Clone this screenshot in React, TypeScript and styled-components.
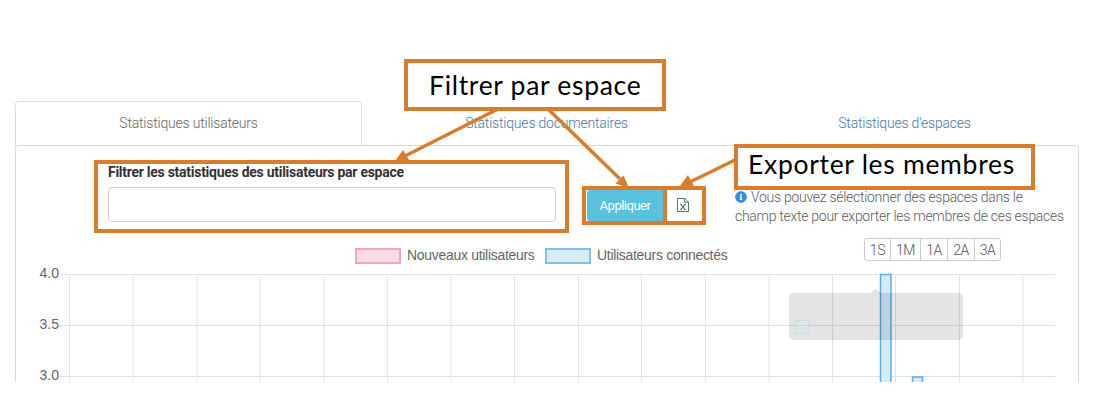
import React from "react";
import styled, { createGlobalStyle } from "styled-components";
import { FaInfoCircle } from "react-icons/fa";

const accent = "#d97c2b";

const GlobalStyle = createGlobalStyle`
  * { box-sizing: border-box; }
  body { margin: 0; background: #fff; font-family: Roboto, "Liberation Sans", sans-serif; }
`;

const Page = styled.main`
  position: relative;
  width: 1095px;
  height: 404px;
  overflow: hidden;
  padding: 101px 16px 0 15px;
  background: #fff;
`;

const Tabs = styled.nav`
  display: flex;
  gap: 11px;
  height: 45px;
  margin-bottom: -1px;
`;

const Tab = styled.a<{ $active?: boolean }>`
  flex: 0 0 347px;
  padding-top: 11px;
  text-align: center;
  font-size: 14px;
  line-height: 20px;
  font-weight: 300;
  letter-spacing: -0.2px;
  color: ${(p) => (p.$active ? "#666" : "#4a76ad")};
  border: 1px solid ${(p) => (p.$active ? "#dcdcdc" : "transparent")};
  border-bottom: 0;
  border-radius: 4px 4px 0 0;
`;

const Panel = styled.section`
  height: 237px;
  border: 1px solid #d8d8d8;
  border-bottom: 0;
  border-radius: 4px 4px 0 0;
`;

const FilterRow = styled.div`
  display: flex;
  align-items: flex-start;
  height: 92px;
  padding: 14px 0 0 78px;
`;

const FilterField = styled.div`
  flex: none;
  width: 475px;
  height: 73px;
  border: 4px solid ${accent};
  padding: 0 9px 0 10px;
`;

const FieldLabel = styled.label`
  display: block;
  height: 23px;
  font-size: 14px;
  line-height: 16px;
  font-weight: 700;
  color: #333;
  letter-spacing: -0.27px;
  white-space: nowrap;
`;

const FieldInput = styled.input`
  display: block;
  width: 448px;
  height: 35px;
  border: 1px solid #ccc;
  border-radius: 4px;
  background: #fff;
  outline: 0;
`;

const Actions = styled.div`
  display: flex;
  flex: none;
  width: 124px;
  height: 39px;
  margin: 26px 0 0 13px;
  border: 4px solid ${accent};
`;

const ApplyButton = styled.button`
  flex: none;
  width: 76px;
  margin-left: 1px;
  padding: 0;
  border: 0;
  border-radius: 3px 0 0 3px;
  background: #5bc0de;
  color: #fff;
  font: 400 13px Roboto, sans-serif;
  letter-spacing: -0.5px;
`;

const ExportButton = styled.button`
  display: flex;
  align-items: center;
  justify-content: center;
  flex: 1;
  padding: 0 4px 1px 0;
  border: 0;
  border-left: 4px solid ${accent};
  background: #fff;
`;

const Hint = styled.p`
  width: 340px;
  margin: 28px 0 0 29px;
  font-size: 14px;
  line-height: 18.5px;
  font-weight: 300;
  letter-spacing: -0.28px;
  color: #5c5c5c;
  white-space: nowrap;
  svg { color: #2f8fdc; font-size: 12px; vertical-align: -1px; margin-right: 4px; }
`;

const ChartHeader = styled.div`
  display: flex;
  height: 24px;
  padding-left: 339px;
`;

const Legend = styled.div`
  display: flex;
  gap: 10px;
  padding-top: 8px;
  width: 509px;
`;

const LegendItem = styled.span<{ $w: number }>`
  display: flex;
  gap: 6px;
  width: ${(p) => p.$w}px;
  font: 14px/18px "Liberation Sans", sans-serif;
  letter-spacing: -0.3px;
  color: #666;
  white-space: nowrap;
`;

const Swatch = styled.i<{ $line: string; $fill: string }>`
  flex: none;
  width: 46px;
  height: 16px;
  margin-top: 2px;
  border: 2px solid ${(p) => p.$line};
  background: ${(p) => p.$fill};
`;

const Periods = styled.div`
  display: flex;
  height: 23px;
  border: 1px solid #ccc;
  border-radius: 3px;
`;

const Period = styled.button<{ $w: number }>`
  width: ${(p) => p.$w}px;
  padding: 0;
  border: 0;
  background: transparent;
  font: 300 14px Roboto, sans-serif;
  letter-spacing: -0.4px;
  color: #555;
  & + & { border-left: 1px solid #ccc; }
`;

const Chart = styled.svg`
  display: block;
  text { font: 14px "Liberation Sans", sans-serif; fill: #666; }
`;

const Callout = styled.div<{ $x: number; $y: number; $w: number; $h: number; $pad: number; $line: number }>`
  position: absolute;
  left: ${(p) => p.$x}px;
  top: ${(p) => p.$y}px;
  width: ${(p) => p.$w}px;
  height: ${(p) => p.$h}px;
  padding-left: ${(p) => p.$pad}px;
  border: 4px solid ${accent};
  background: #fff;
  color: #000;
  font: 26.5px Lato, sans-serif;
  line-height: ${(p) => p.$line}px;
  letter-spacing: 0.7px;
  white-space: nowrap;
`;

const Arrows = styled.svg`
  position: absolute;
  left: 0;
  top: 0;
  pointer-events: none;
`;

const columns = [69.5, 133, 197, 260, 324, 387.5, 451, 514.5, 578.5, 641.5, 705.5, 769, 832.5, 895.5, 959.5, 1023];
const rows = [
  { y: 274.5, label: "4.0" },
  { y: 325.5, label: "3.5" },
  { y: 376.5, label: "3.0" },
];
const periods = [
  { label: "1S", w: 25 },
  { label: "1M", w: 30 },
  { label: "1A", w: 27 },
  { label: "2A", w: 27 },
  { label: "3A", w: 26 },
];

const ExcelIcon = () => (
  <svg width="12" height="14" viewBox="0 0 12 14" fill="none" stroke="#4a7d5c" strokeWidth="1">
    <path d="M.5.5H8L11.5 4V13.5H.5Z" />
    <path d="M7.7.7V4.3H11.3" />
    <path d="M3.9 6.4L7.9 11.4M8.1 6.4L3.9 11.4" strokeWidth="1.1" />
    <path d="M3 6.3H5M7 6.3H9M3 11.5H5M7 11.5H9" strokeWidth=".8" />
  </svg>
);

export default function App() {
  return (
    <Page>
      <GlobalStyle />
      <Tabs>
        <Tab $active>Statistiques utilisateurs</Tab>
        <Tab>Statistiques documentaires</Tab>
        <Tab>Statistiques d'espaces</Tab>
      </Tabs>
      <Panel>
        <FilterRow>
          <FilterField>
            <FieldLabel htmlFor="spaces">Filtrer les statistiques des utilisateurs par espace</FieldLabel>
            <FieldInput id="spaces" />
          </FilterField>
          <Actions>
            <ApplyButton>Appliquer</ApplyButton>
            <ExportButton aria-label="Exporter"><ExcelIcon /></ExportButton>
          </Actions>
          <Hint>
            <FaInfoCircle />Vous pouvez sélectionner des espaces dans le<br />
            champ texte pour exporter les membres de ces espaces
          </Hint>
        </FilterRow>
        <ChartHeader>
          <Legend>
            <LegendItem $w={180}><Swatch $line="#f5a3b7" $fill="#fbdbe3" />Nouveaux utilisateurs</LegendItem>
            <LegendItem $w={190}><Swatch $line="#84c0ec" $fill="#d5ebfa" />Utilisateurs connectés</LegendItem>
          </Legend>
          <Periods>
            {periods.map((p) => <Period key={p.label} $w={p.w}>{p.label}</Period>)}
          </Periods>
        </ChartHeader>
        <Chart width="1062" height="120" viewBox="16 262 1062 120">
          {rows.map((r) => (
            <g key={r.label}>
              <path d={`M59 ${r.y}H1055`} stroke="#e0e0e0" />
              <text x="39.5" y={r.y + 3.5}>{r.label}</text>
            </g>
          ))}
          {columns.map((x) => <path key={x} d={`M${x} 274V382`} stroke="#e3e3e3" />)}
          <path d="M880.5 383V274.5H891V383" fill="#d5ebfa" stroke="#5baee6" strokeWidth="1.5" />
          <path d="M912.5 383V377H922.5V383" fill="#d5ebfa" stroke="#5baee6" strokeWidth="1.5" />
          <path d="M794 293H870L875.5 288.5L881 293H958Q963 293 963 298V335Q963 340 958 340H794Q789 340 789 335V298Q789 293 794 293Z" fill="#000" fillOpacity=".105" />
          <rect x="795.5" y="320.5" width="13" height="13" fill="#d9e3e9" fillOpacity=".5" stroke="#cddde6" />
        </Chart>
      </Panel>
      <Arrows width="1095" height="404" fill={accent} stroke={accent} strokeWidth="3.5">
        <path d="M498 109L405 156" />
        <path d="M395 161L403 150L409 160Z" stroke="none" />
        <path d="M548 109L620 179" />
        <path d="M629 188L615.500 183.500L623.500 175.500Z" stroke="none" />
        <path d="M737 159L690 182" />
        <path d="M680 186L688 175L694 186Z" stroke="none" />
      </Arrows>
      <Callout $x={404} $y={59} $w={262} $h={52} $pad={21} $line={45}>Filtrer par espace</Callout>
      <Callout $x={734} $y={144} $w={301} $h={46} $pad={10} $line={32}>Exporter les membres</Callout>
    </Page>
  );
}
